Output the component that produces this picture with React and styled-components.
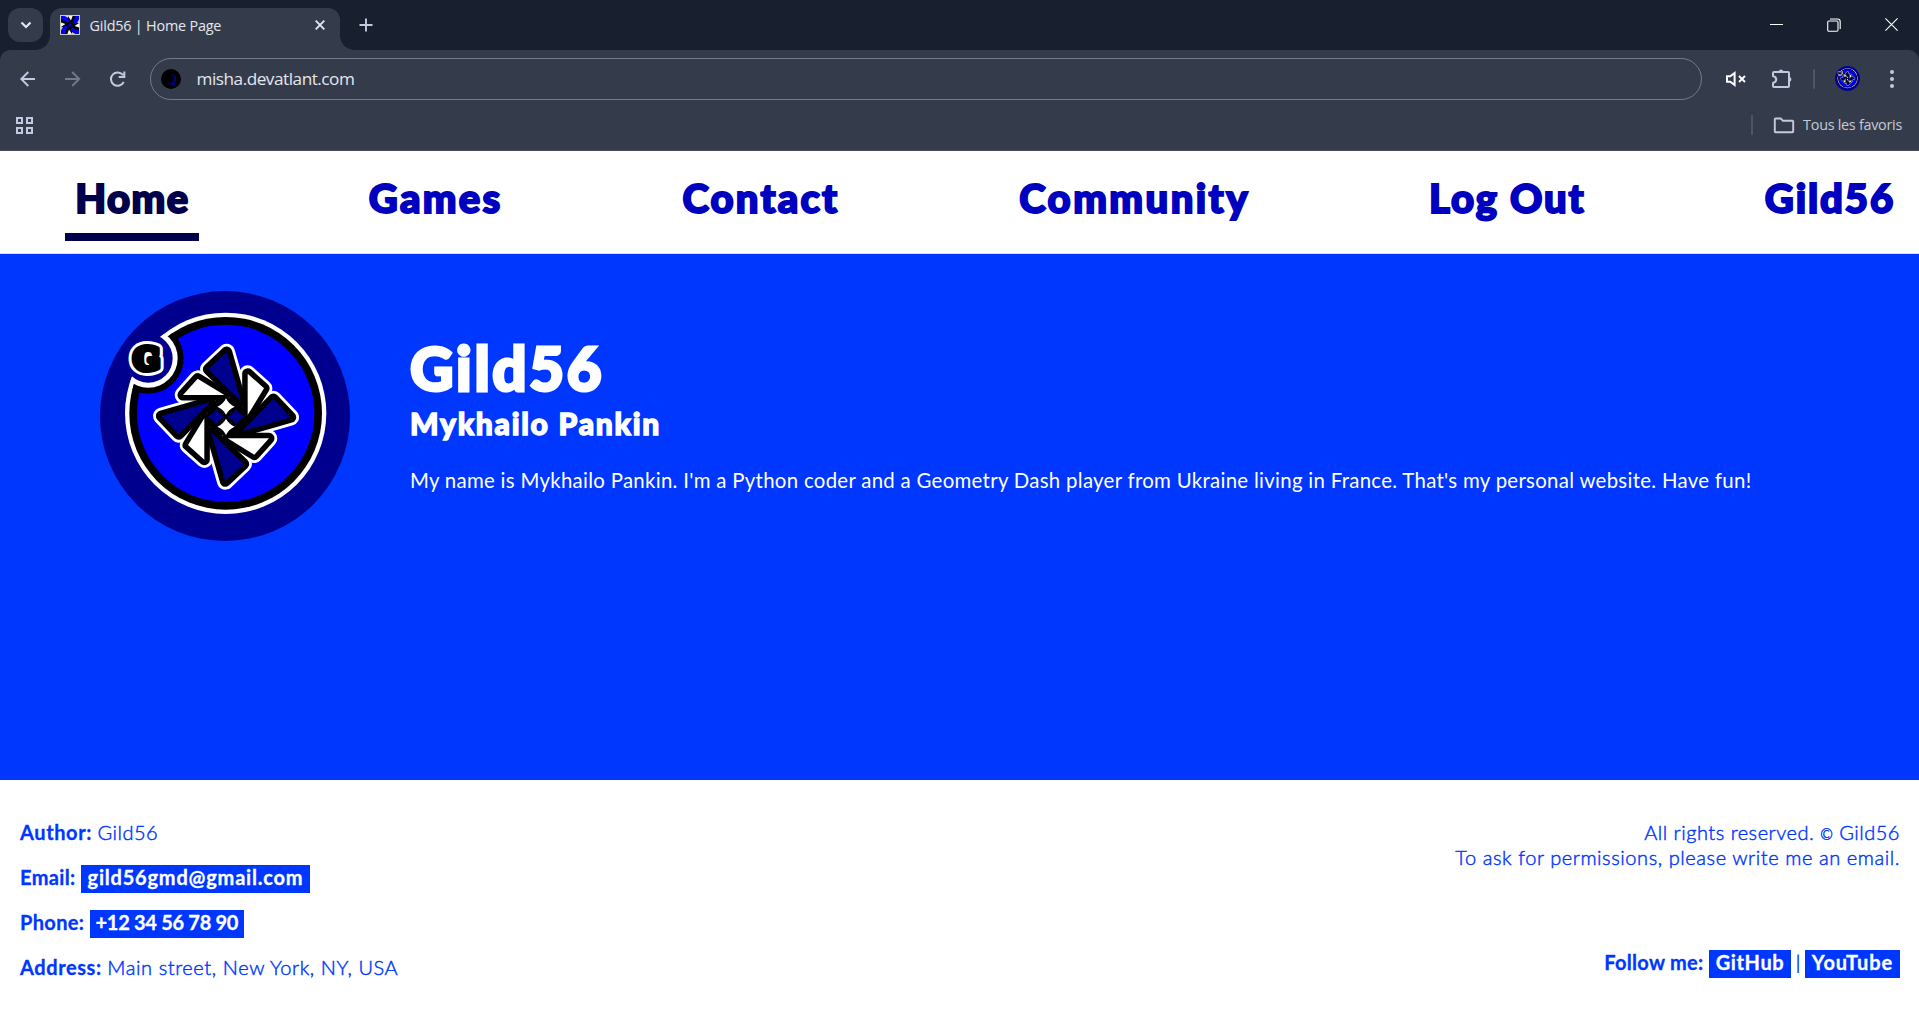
import React, { useId } from "react";
import styled, { createGlobalStyle, css } from "styled-components";

const color = {
  strip: "#18202f",
  chrome: "#343c4c",
  icon: "#c3c9de",
  blue: "#0037ff",
  navy: "#00008f",
  link: "#0000bf",
  active: "#00004b",
};

const GlobalStyle = createGlobalStyle`
  * { box-sizing: border-box; }
  body { margin: 0; background: #fff; font-family: Lato, "Open Sans", sans-serif; overflow: hidden; }
`;

const Window = styled.div`
  display: flex;
  flex-direction: column;
  width: 100%;
  height: 100vh;
`;

/* Browser chrome */

const Chrome = styled.div`
  flex: none;
  background: ${color.strip};
  font-family: "Open Sans", "Noto Sans", sans-serif;
  color: #e4e6ee;
`;

const TabStrip = styled.div`
  display: flex;
  height: 50px;
  padding: 8px 0 0 8px;
`;

const TabSearch = styled.div`
  display: grid;
  place-items: center;
  width: 35px;
  height: 34px;
  border-radius: 12px;
  background: ${color.chrome};
`;

const Tab = styled.div`
  position: relative;
  display: flex;
  align-items: center;
  width: 290px;
  margin-left: 7px;
  padding: 0 15px 8px 10px;
  border-radius: 12px 12px 0 0;
  background: ${color.chrome};

  &::before,
  &::after {
    content: "";
    position: absolute;
    bottom: 0;
    width: 14px;
    height: 14px;
  }
  &::before {
    left: -14px;
    background: radial-gradient(circle at 0 0, transparent 13.5px, ${color.chrome} 14px);
  }
  &::after {
    right: -14px;
    background: radial-gradient(circle at 100% 0, transparent 13.5px, ${color.chrome} 14px);
  }
`;

const TabTitle = styled.span`
  flex: 1;
  margin: 1px 0 0 9.5px;
  font-size: 14.4px;
  line-height: 20px;
  letter-spacing: -0.2px;
  white-space: nowrap;
`;

const NewTab = styled.div`
  display: flex;
  align-items: center;
  height: 34px;
  margin-left: 19px;
`;

const WindowControls = styled.div`
  display: flex;
  align-items: center;
  gap: 44px;
  height: 33px;
  margin-left: auto;
  padding-right: 21px;
`;

const Toolbar = styled.div`
  display: flex;
  align-items: center;
  height: 57px;
  padding: 0 19px 0 18px;
  border-radius: 10px 10px 0 0;
  background: ${color.chrome};
`;

const NavButtons = styled.div`
  display: flex;
  align-items: center;
  gap: 25px;
  width: 132px;
`;

const AddressBar = styled.div`
  display: flex;
  align-items: center;
  flex: 1;
  height: 42px;
  padding-left: 10px;
  border: 1px solid #777a82;
  border-radius: 21px;
`;

const Url = styled.span`
  margin: 1px 0 0 15.5px;
  font-size: 17.2px;
  line-height: 24px;
  letter-spacing: -0.48px;
`;

const ToolbarActions = styled.div`
  display: flex;
  align-items: center;
  width: 198px;
  padding-left: 23px;
`;

const Divider = styled.div`
  flex: none;
  width: 2px;
  height: 20px;
  border-radius: 1px;
  background: #4c566b;
  margin: 0 ${(p) => p.$after}px 0 ${(p) => p.$before}px;
`;

const Spacer = styled.div`
  flex: 1;
`;

const BookmarksBar = styled.div`
  display: flex;
  align-items: center;
  height: 44px;
  padding: 0 17px 7px 15px;
  border-bottom: 1px solid #4a4e5a;
  background: ${color.chrome};
`;

const BookmarkLabel = styled.span`
  margin-left: 8.5px;
  font-size: 14.4px;
  line-height: 20px;
  letter-spacing: -0.28px;
  color: #c6cad6;
`;

/* Page */

const heavy = css`
  font-weight: 900;
  -webkit-text-stroke: ${(p) => p.$stroke || 2}px currentColor;
`;

const SiteNav = styled.nav`
  display: flex;
  justify-content: space-between;
  flex: none;
  height: 103px;
  padding: 0 14px 0 65px;
  border-bottom: 1px solid #d8dcec;
  background: #fff;
`;

const NavLink = styled.a`
  ${heavy}
  display: flex;
  justify-content: center;
  width: ${(p) => p.$width}px;
  height: 90px;
  padding: 23px 0 0 1px;
  border-bottom: 8px solid ${(p) => (p.$active ? color.active : "transparent")};
  color: ${(p) => (p.$active ? color.active : color.link)};
  font-size: 40px;
  line-height: 48px;
  letter-spacing: ${(p) => p.$track}px;
  white-space: nowrap;
`;

const Hero = styled.main`
  display: flex;
  align-items: flex-start;
  flex: 1;
  gap: 60px;
  padding: 37px 100px 0;
  background: ${color.blue};
  color: #fff;
`;

const Intro = styled.section`
  padding-top: 41px;
  white-space: nowrap;
`;

const Title = styled.h1`
  ${heavy}
  margin: 0;
  font-size: 60px;
  line-height: 72px;
  letter-spacing: 2.7px;
`;

const Subtitle = styled.h2`
  ${heavy}
  margin: 1px 0 26px;
  font-size: 30px;
  line-height: 37px;
  letter-spacing: 1.75px;
`;

const Bio = styled.p`
  margin: 0;
  font-size: 20.4px;
  line-height: 24px;
  letter-spacing: 0.3px;
`;

const Footer = styled.footer`
  display: flex;
  justify-content: space-between;
  flex: none;
  height: 233px;
  padding: 40px 19px 0 20px;
  color: ${color.blue};
  font-size: 20px;
  line-height: 25px;
  white-space: nowrap;
`;

const FooterColumn = styled.div`
  display: flex;
  flex-direction: column;
  gap: ${(p) => p.$gap}px;
  align-items: ${(p) => (p.$end ? "flex-end" : "flex-start")};
`;

const FooterRow = styled.div`
  display: flex;
  align-items: flex-start;
  gap: 5.5px;
  margin-top: ${(p) => p.$top || 0}px;
`;

const Label = styled.strong`
  font-weight: 700;
  -webkit-text-stroke: 0.3px currentColor;
  letter-spacing: ${(p) => p.$track}px;
`;

const Value = styled.span`
  height: 25px;
  font-weight: 300;
  -webkit-text-stroke: 0.45px currentColor;
  letter-spacing: ${(p) => p.$track}px;
`;

const Copyright = styled.span`
  font-size: 15px;
  line-height: 0;
`;

const ChipSlot = styled.span`
  height: 25px;
`;

const ChipLink = styled.a`
  display: flex;
  justify-content: center;
  width: ${(p) => p.$width}px;
  height: 28px;
  background: ${color.blue};
  color: #fff;
  font-weight: 700;
  -webkit-text-stroke: 0.3px currentColor;
  letter-spacing: ${(p) => p.$track}px;
`;

const Pipe = styled.span`
  display: flex;
  justify-content: center;
  width: 3px;
  font-weight: 400;
`;

/* Drawings */

const Svg = styled.svg`
  display: block;
  flex: none;
  overflow: visible;
  margin-left: ${(p) => p.$left || 0}px;
`;

const quarterTurns = [0, 90, 180, 270];

function Blades({ part }) {
  return quarterTurns.map((a) => (
    <g key={a} transform={`rotate(${a} 408 410)`}>
      <polygon points="410,216 355,268 452,362" fill={part === "fill" ? color.navy : undefined} />
      <polygon points="473,281 522,325 473,405" fill={part === "fill" ? "#fff" : undefined} />
    </g>
  ));
}

function Emblem({ size, left }) {
  const id = useId().replace(/:/g, "");
  return (
    <Svg $left={left} width={size} height={size} viewBox="30 33 750 750">
      <clipPath id={`${id}o`}>
        <circle cx="407" cy="400" r="302" />
      </clipPath>
      <clipPath id={`${id}i`}>
        <circle cx="407" cy="400" r="289" />
      </clipPath>
      <circle cx="405" cy="408" r="375" fill={color.navy} />
      <circle cx="407" cy="400" r="302" fill="#fff" />
      <circle cx="407" cy="400" r="289" fill="#000" />
      <circle cx="407" cy="400" r="266" fill="#00f" />
      <circle cx="175" cy="235" r="106" fill="#000" clipPath={`url(#${id}i)`} />
      <circle cx="175" cy="235" r="88" fill="#fff" clipPath={`url(#${id}o)`} />
      <circle cx="175" cy="235" r="73" fill={color.navy} />
      <g
        fontFamily="DejaVu Serif, serif"
        fontWeight="700"
        fontSize="94"
        textAnchor="middle"
        strokeLinejoin="round"
      >
        <text x="170" y="270" fill="#fff" stroke="#fff" strokeWidth="36">G</text>
        <text x="170" y="270" fill="#000" stroke="#000" strokeWidth="18">G</text>
      </g>
      <g fill="#fff" stroke="#fff" strokeWidth="50" strokeLinejoin="round">
        <Blades />
      </g>
      <g fill="#000" stroke="#000" strokeWidth="33" strokeLinejoin="round">
        <Blades />
      </g>
      <circle cx="408" cy="410" r="58" />
      <Blades part="fill" />
      <g fill={color.navy}>
        <path d="M352 410 Q371 402 378 387 Q387 402 403 410 Q387 418 378 434 Q371 418 352 410Z" />
        <path d="M413 410 Q430 402 438 387 Q446 402 464 410 Q446 418 438 434 Q430 418 413 410Z" />
      </g>
      <g fill="#fff">
        <path d="M408 355 Q416 373 434 380 Q416 388 408 404 Q400 388 382 380 Q400 373 408 355Z" />
        <path d="M408 416 Q416 432 434 440 Q416 447 408 465 Q400 447 382 440 Q400 432 408 416Z" />
      </g>
    </Svg>
  );
}

function Favicon() {
  return (
    <Svg width="20" height="20" viewBox="0 0 20 20">
      <rect x="0.5" y="0.5" width="19" height="19" fill="#000" stroke="#c9c9bd" />
      {quarterTurns.map((a) => (
        <g key={a} transform={`rotate(${a} 10 10)`}>
          <polygon points="1,1 5,1 9,4.5 8.6,7.4 1,4.6" fill="#00f" />
          <polygon points="8,1 12.6,1 11,5.4" fill="#f4f4ee" />
          <polygon points="4.6,1 8,1 8,3" fill="#c9c9bd" />
        </g>
      ))}
      <rect x="8.5" y="8.5" width="3" height="3" fill="#00c" />
    </Svg>
  );
}

function Stroke({ w, h, d, c = color.icon, sw = 2, left, children }) {
  return (
    <Svg $left={left} width={w} height={h} viewBox={`0 0 ${w} ${h}`} fill="none" stroke={c} strokeWidth={sw}>
      {d && <path d={d} />}
      {children}
    </Svg>
  );
}

const links = [
  { text: "Home", width: 134, track: 1.5, active: true },
  { text: "Games", width: 154, track: 2.3 },
  { text: "Contact", width: 178, track: 2.2 },
  { text: "Community", width: 251, track: 2.45 },
  { text: "Log Out", width: 176, track: 1.8 },
  { text: "Gild56", width: 151, track: 1.9 },
];

function Browser() {
  return (
    <Chrome>
      <TabStrip>
        <TabSearch>
          <Stroke w={12} h={8} d="M1.5 1.5 L6 6 L10.5 1.5" c="#e4e6ee" sw={2.2} />
        </TabSearch>
        <Tab>
          <Favicon />
          <TabTitle>Gild56 | Home Page</TabTitle>
          <Stroke w={10} h={10} d="M0.7 0.7 L9.3 9.3 M9.3 0.7 L0.7 9.3" c="#e4e6ee" sw={1.9} />
        </Tab>
        <NewTab>
          <Stroke w={14} h={14} d="M7 0.5 V13.5 M0.5 7 H13.5" sw={1.9} />
        </NewTab>
        <WindowControls>
          <Stroke w={13} h={14} d="M0 6.5 H13" c="#fff" sw={1} />
          <Stroke w={14} h={14} c="#fff" sw={1.1}>
            <rect x="0.7" y="3" width="10.3" height="10.3" rx="1.2" />
            <path d="M3 1 H10.5 Q13.2 1 13.2 3.7 V11" />
          </Stroke>
          <Stroke w={13} h={13} d="M0.4 0.4 L12.6 12.6 M12.6 0.4 L0.4 12.6" c="#fff" sw={1.1} />
        </WindowControls>
      </TabStrip>
      <Toolbar>
        <NavButtons>
          <Stroke w={20} h={20} d="M17 10 H3.5 M10.3 3 L3.3 10 L10.3 17" sw={1.9} />
          <Stroke w={20} h={20} d="M2 10 H16 M9.2 3 L16.2 10 L9.2 17" c="#727988" sw={1.9} />
          <Stroke w={20} h={20} sw={2} d="M15.7 13 A6.7 6.7 0 1 1 15.1 6.2 M16.3 2.6 V8 H10.7" />
        </NavButtons>
        <AddressBar>
          <Svg width="20" height="20" viewBox="0 0 20 20">
            <circle cx="10" cy="10" r="10" fill="#000" />
            <path d="M10.5 5 Q15 5.5 15.3 10.5 Q15 13 12.8 13.8 L15 16.3 Q8 16.5 5.5 12.5 Q9 15 12 13 Q15 9 10.5 5Z" fill="#00008a" />
          </Svg>
          <Url>misha.devatlant.com</Url>
        </AddressBar>
        <ToolbarActions>
          <Stroke w={22} h={16} c="#fff" sw={2}>
            <path d="M2 5.3 H5.3 L9.6 2 V14 L5.3 10.7 H2 Z" />
            <path d="M14 5 L20 11 M20 5 L14 11" strokeWidth={1.8} />
          </Stroke>
          <Stroke w={22} h={22} left={24} sw={2}>
            <path d="M3 4 H17 Q18 4 18 5 V18 Q18 19 17 19 H3 Q2 19 2 18 V15 Q5.2 14.2 5.2 11.5 Q5.2 8.8 2 8 V5 Q2 4 3 4 Z" strokeLinejoin="round" />
            <path d="M7.6 3.4 A2.5 2.5 0 0 1 12.4 3.4 Z M18.6 9 A2.5 2.5 0 0 1 18.6 13.8 Z" fill={color.icon} stroke="none" />
          </Stroke>
          <Divider $before={20} $after={20} />
          <Emblem size={25} />
          <Svg $left={30} width="4" height="20" viewBox="0 0 4 20" fill={color.icon}>
            <circle cx="2" cy="3" r="2" />
            <circle cx="2" cy="10" r="2" />
            <circle cx="2" cy="17" r="2" />
          </Svg>
        </ToolbarActions>
      </Toolbar>
      <BookmarksBar>
        <Stroke w={19} h={19} sw={2}>
          <path d="M2 2 H7 V7 H2 Z M12 2 H17 V7 H12 Z M2 12 H7 V17 H2 Z M12 12 H17 V17 H12 Z" />
        </Stroke>
        <Spacer />
        <Divider $before={0} $after={20} />
        <Stroke
          w={22}
          h={18}
          sw={1.9}
          d="M2.5 2.5 H7.8 L10 4.8 H19.5 Q20.2 4.8 20.2 5.5 V15.5 Q20.2 16.2 19.5 16.2 H2.5 Q1.8 16.2 1.8 15.5 V3.2 Q1.8 2.5 2.5 2.5Z"
        />
        <BookmarkLabel>Tous les favoris</BookmarkLabel>
      </BookmarksBar>
    </Chrome>
  );
}

function Chip({ width, track, children }) {
  return (
    <ChipSlot>
      <ChipLink $width={width} $track={track}>
        {children}
      </ChipLink>
    </ChipSlot>
  );
}

export default function App() {
  return (
    <Window>
      <GlobalStyle />
      <Browser />
      <SiteNav>
        {links.map((l) => (
          <NavLink key={l.text} $width={l.width} $track={l.track} $active={l.active}>
            {l.text}
          </NavLink>
        ))}
      </SiteNav>
      <Hero>
        <Emblem size={250} />
        <Intro>
          <Title $stroke={3}>Gild56</Title>
          <Subtitle $stroke={1.4}>Mykhailo Pankin</Subtitle>
          <Bio>
            My name is Mykhailo Pankin. I'm a Python coder and a Geometry Dash player from Ukraine
            living in France. That's my personal website. Have fun!
          </Bio>
        </Intro>
      </Hero>
      <Footer>
        <FooterColumn $gap={20}>
          <FooterRow>
            <Label $track={0.6}>Author:</Label>
            <Value $track={0.5}>Gild56</Value>
          </FooterRow>
          <FooterRow>
            <Label $track={0.35}>Email:</Label>
            <Chip width={229} track={0.8}>gild56gmd@gmail.com</Chip>
          </FooterRow>
          <FooterRow>
            <Label $track={0.35}>Phone:</Label>
            <Chip width={154} track={-0.3}>+12 34 56 78 90</Chip>
          </FooterRow>
          <FooterRow>
            <Label $track={0.6}>Address:</Label>
            <Value $track={0.6}>Main street, New York, NY, USA</Value>
          </FooterRow>
        </FooterColumn>
        <FooterColumn $gap={0} $end>
          <Value $track={0.52}>
            All rights reserved. <Copyright>©</Copyright> Gild56
          </Value>
          <Value $track={0.58}>To ask for permissions, please write me an email.</Value>
          <FooterRow $top={80}>
            <Label $track={0.3}>Follow me:</Label>
            <Chip width={82} track={0.6}>GitHub</Chip>
            <Pipe>|</Pipe>
            <Chip width={95} track={0.9}>YouTube</Chip>
          </FooterRow>
        </FooterColumn>
      </Footer>
    </Window>
  );
}
